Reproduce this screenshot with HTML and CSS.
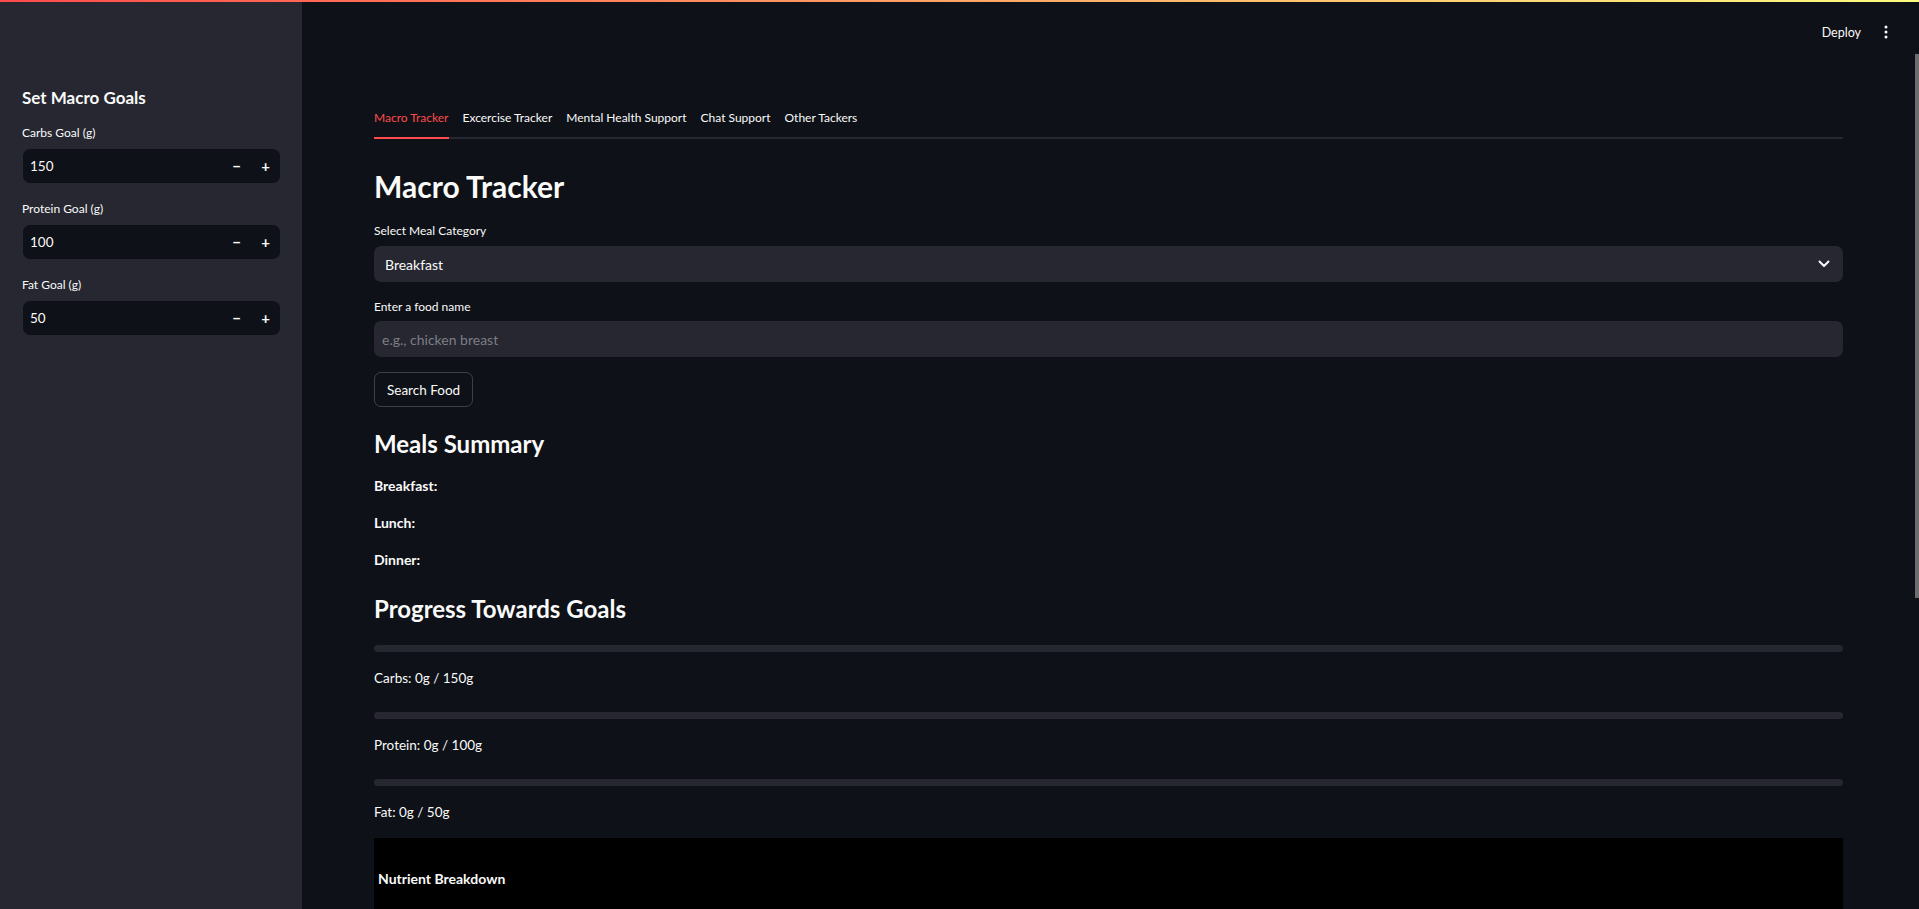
FILE: index.html
```html
<!DOCTYPE html>
<html lang="en">
<head>
<meta charset="utf-8">
<title>Macro Tracker</title>
<link rel="stylesheet" href="styles.css">
</head>
<body>
<div class="decoration"></div>
<div class="app">
  <aside class="sidebar">
    <h3 class="side-title">Set Macro Goals</h3>
    <div class="field">
      <label class="side-label">Carbs Goal (g)</label>
      <div class="num-input"><span class="num-value">150</span><span class="step">&minus;</span><span class="step">+</span></div>
    </div>
    <div class="field">
      <label class="side-label">Protein Goal (g)</label>
      <div class="num-input"><span class="num-value">100</span><span class="step">&minus;</span><span class="step">+</span></div>
    </div>
    <div class="field">
      <label class="side-label">Fat Goal (g)</label>
      <div class="num-input"><span class="num-value">50</span><span class="step">&minus;</span><span class="step">+</span></div>
    </div>
  </aside>
  <main class="main">
    <header class="topbar">
      <span class="deploy">Deploy</span>
      <svg class="kebab" width="4" height="14" viewBox="0 0 4 14"><circle cx="2" cy="2" r="1.5" fill="#fafafa"/><circle cx="2" cy="7" r="1.5" fill="#fafafa"/><circle cx="2" cy="12" r="1.5" fill="#fafafa"/></svg>
    </header>
    <div class="content">
      <nav class="tabs">
        <span class="tab active">Macro Tracker</span>
        <span class="tab">Excercise Tracker</span>
        <span class="tab">Mental Health Support</span>
        <span class="tab">Chat Support</span>
        <span class="tab">Other Tackers</span>
      </nav>
      <h1 class="title">Macro Tracker</h1>
      <div class="label">Select Meal Category</div>
      <div class="select"><span>Breakfast</span>
        <svg width="12" height="8" viewBox="0 0 12 8"><path d="M1.5 1.5 L6 6 L10.5 1.5" stroke="#fafafa" stroke-width="2" fill="none" stroke-linecap="round" stroke-linejoin="round"/></svg>
      </div>
      <div class="label">Enter a food name</div>
      <div class="text-input">e.g., chicken breast</div>
      <button class="btn">Search Food</button>
      <h2 class="h2 h2-meals">Meals Summary</h2>
      <p class="meal">Breakfast:</p>
      <p class="meal">Lunch:</p>
      <p class="meal">Dinner:</p>
      <h2 class="h2 h2-progress">Progress Towards Goals</h2>
      <div class="bar bar-first"></div>
      <p class="stat">Carbs: 0g / 150g</p>
      <div class="bar"></div>
      <p class="stat">Protein: 0g / 100g</p>
      <div class="bar"></div>
      <p class="stat">Fat: 0g / 50g</p>
      <div class="chart"><span class="chart-title">Nutrient Breakdown</span></div>
    </div>
  </main>
</div>
<div class="scrollbar"></div>
</body>
</html>
```
FILE: styles.css
```css
* { box-sizing: border-box; }
html, body { margin: 0; padding: 0; height: 100%; overflow: hidden; }
body {
  background: #0e1117;
  color: #fafafa;
  font-family: Lato, "Noto Sans", sans-serif;
}
.decoration {
  height: 2px;
  background: linear-gradient(90deg, #ff4b4b, #fffd80);
}
.app {
  display: flex;
  height: 907px;
  overflow: hidden;
}
.sidebar {
  width: 302px;
  flex: none;
  background: #262730;
  padding: 84px 22px 0 23px;
}
.side-title {
  margin: 0;
  font-size: 17px;
  line-height: 24px;
  font-weight: 700;
  margin-left: -1px;
}
.field { margin-top: 14px; }
.field + .field { margin-top: 17px; }
.side-label {
  display: block;
  font-size: 12px;
  line-height: 18px;
  margin-left: -1px;
  margin-bottom: 7px;
}
.num-input {
  display: flex;
  align-items: center;
  height: 34px;
  background: #0e1117;
  border-radius: 7px;
  font-size: 13.5px;
}
.num-value { flex: 1; padding-left: 7px; }
.step {
  width: 29px;
  text-align: center;
  font-weight: 700;
  font-size: 15px;
}
.main {
  flex: 1;
  display: flex;
  flex-direction: column;
  min-width: 0;
}
.topbar {
  flex: none;
  height: 62px;
  display: flex;
  align-items: center;
  justify-content: flex-end;
  padding-right: 31px;
  padding-bottom: 2px;
  gap: 23px;
}
.deploy { font-size: 12.5px; }
.content {
  flex: none;
  padding: 40px 0 0 72px;
  width: 1541px;
}
.tabs {
  display: flex;
  gap: 14px;
  border-bottom: 2px solid #262730;
}
.tab {
  font-size: 12px;
  line-height: 20px;
  padding: 4px 0 9px;
  margin-bottom: -2px;
  border-bottom: 2px solid transparent;
}
.tab.active { color: #ff4b4b; border-bottom-color: #ff4b4b; }
.title {
  margin: 27px 0 0;
  font-size: 30px;
  line-height: 40px;
  font-weight: 700;
}
.label {
  font-size: 12px;
  line-height: 18px;
  margin-top: 16px;
}
.select, .text-input {
  margin-top: 6px;
  height: 36px;
  background: #262730;
  border-radius: 7px;
  display: flex;
  align-items: center;
  font-size: 14px;
}
.select { justify-content: space-between; padding: 0 13px 0 11px; }
.text-input { margin-top: 5px; padding-left: 8px; color: #7c7e86; }
.btn {
  display: block;
  margin-top: 15px;
  height: 35px;
  padding: 0 12px;
  background: transparent;
  color: #fafafa;
  border: 1px solid rgba(250,250,250,0.2);
  border-radius: 7px;
  font-family: inherit;
  font-size: 13.5px;
}
.h2 {
  margin: 0;
  font-size: 24px;
  line-height: 30px;
  font-weight: 700;
}
.h2-meals { margin-top: 22px; }
.meal {
  margin: 17px 0 0;
  font-size: 14px;
  line-height: 20px;
  font-weight: 700;
}
.h2-progress { margin-top: 24px; }
.bar {
  height: 7px;
  background: #262730;
  border-radius: 4px;
  margin-top: 24px;
}
.bar-first { margin-top: 21px; }
.stat {
  margin: 16px 0 0;
  font-size: 13.5px;
  line-height: 20px;
}
.chart {
  margin-top: 16px;
  height: 200px;
  background: #000;
  padding: 30px 0 0 4px;
}
.chart-title { font-size: 14px; line-height: 20px; font-weight: 700; }
.scrollbar {
  position: fixed;
  right: 0;
  top: 54px;
  width: 4px;
  height: 544px;
  background: #6d6d6d;
}
```
